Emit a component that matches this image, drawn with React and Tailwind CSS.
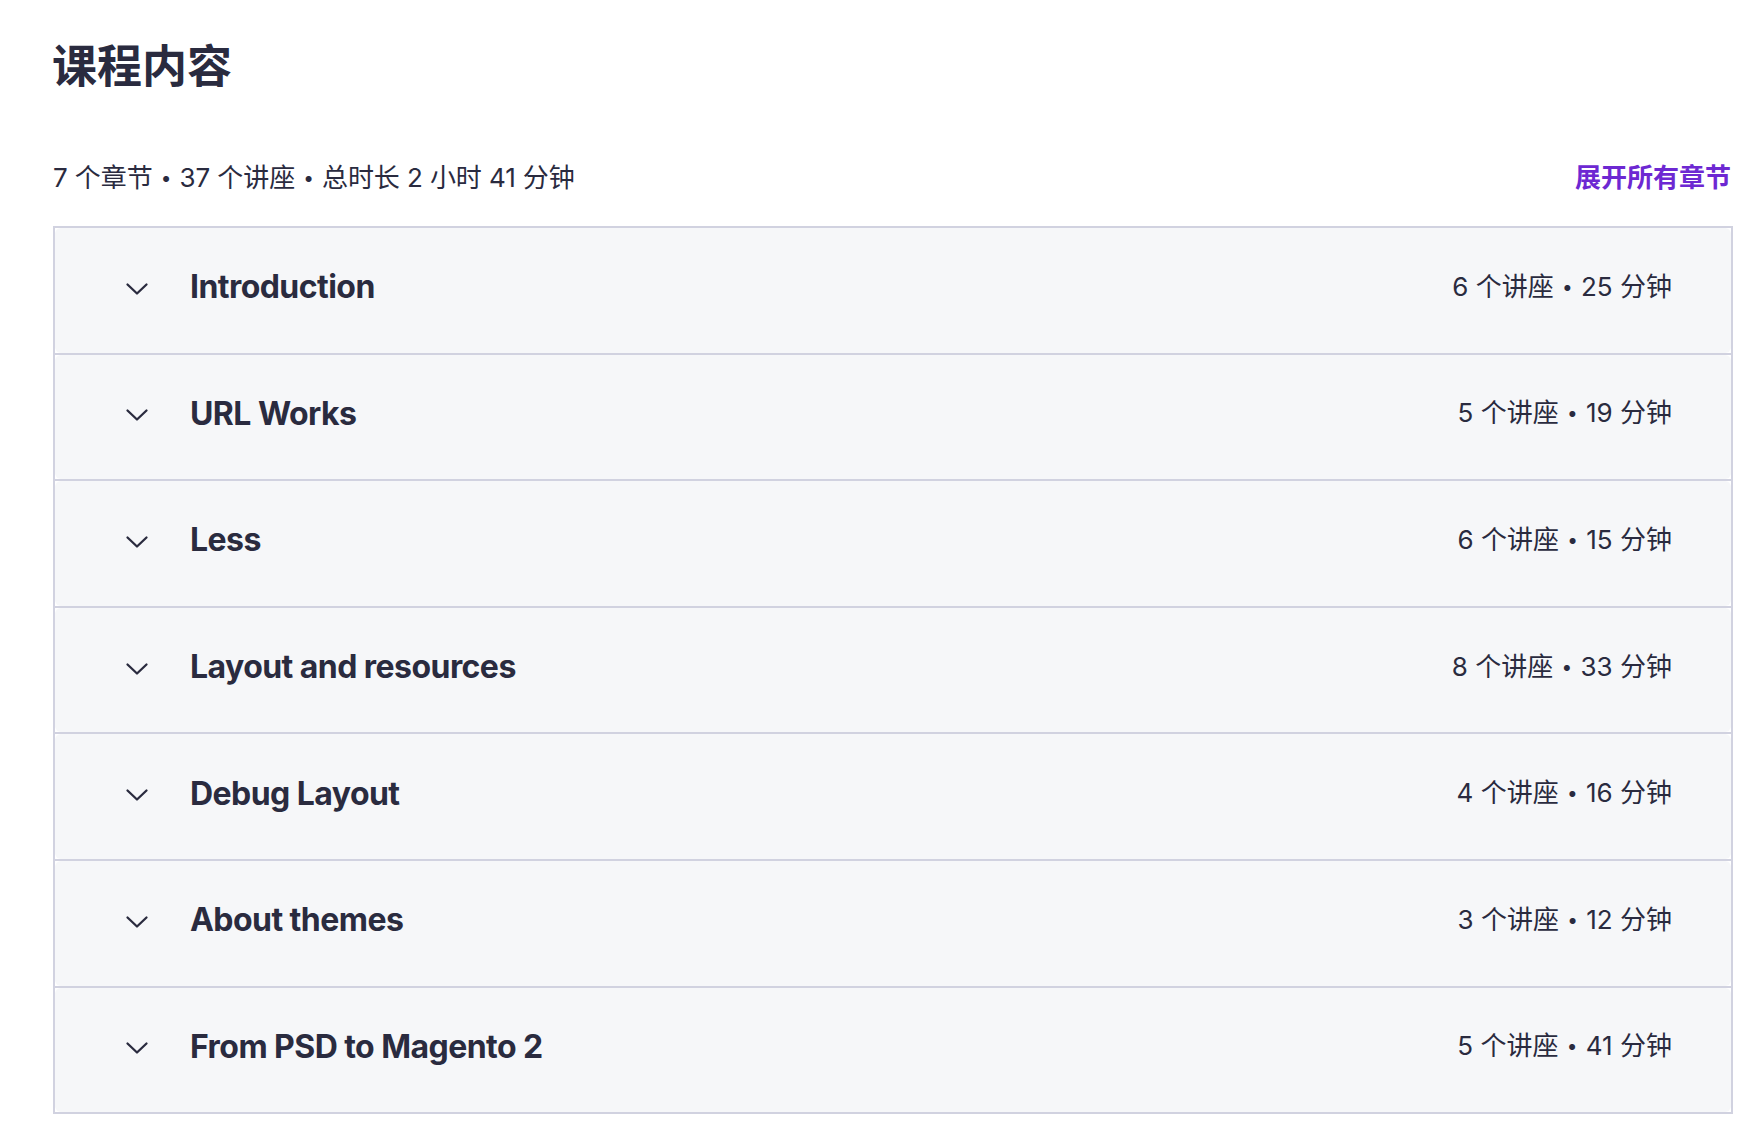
import React from "react";

const sections = [
  { title: "Introduction", l: "6", m: "25" },
  { title: "URL Works", l: "5", m: "19" },
  { title: "Less", l: "6", m: "15" },
  { title: "Layout and resources", l: "8", m: "33" },
  { title: "Debug Layout", l: "4", m: "16" },
  { title: "About themes", l: "3", m: "12" },
  { title: "From PSD to Magento 2", l: "5", m: "41" },
];

function Dot() {
  return <span className="text-[19px] align-[2px] mx-[1px]">•</span>;
}

function Chevron() {
  return (
    <svg width="24" height="14" viewBox="0 0 24 14" fill="none" className="shrink-0 mt-[3px]">
      <polyline
        points="2.5,2.5 12,11.5 21.5,2.5"
        stroke="#2a2b3f"
        strokeWidth="2.3"
        strokeLinecap="round"
        strokeLinejoin="round"
      />
    </svg>
  );
}

export default function App() {
  return (
    <div className="min-h-[1126px] bg-white text-[#2a2b3f] font-['Inter','Noto_Sans_CJK_SC',sans-serif]">
      <div className="ml-[53px] w-[1680px] pt-[37px]">
        <h2 className="text-[45px] leading-[54px] font-bold font-['Noto_Sans_CJK_SC',sans-serif] -ml-[1px]">
          课程内容
        </h2>
        <div className="mt-[69px] flex items-center justify-between h-[36px]">
          <div className="text-[26px] leading-[36px] tracking-[-0.1px]">
            7 个章节 <Dot /> 37 个讲座 <Dot /> 总时长 2 小时 41 分钟
          </div>
          <button className="text-[26px] leading-[36px] font-bold text-[#6d28d2] mr-[2px]">
            展开所有章节
          </button>
        </div>
        <div className="mt-[30px] border-2 border-[#d1d2e0] bg-white">
          {sections.map((s, i) => (
            <div
              key={s.title}
              className={i < sections.length - 1 ? "border-b-2 border-[#d1d2e0]" : ""}
            >
              <div className="h-[124.6px] bg-[#f6f7f9] rounded-[6px] flex items-center justify-between pl-[70px] pr-[59px] pb-[6px]">
                <div className="flex items-center">
                  <Chevron />
                  <span className="ml-[41px] text-[32px] font-bold tracking-[-0.55px] leading-[40px]">
                    {s.title}
                  </span>
                </div>
                <span className="text-[26px] leading-[36px]">
                  {s.l} 个讲座 <Dot /> {s.m} 分钟
                </span>
              </div>
            </div>
          ))}
        </div>
      </div>
    </div>
  );
}
